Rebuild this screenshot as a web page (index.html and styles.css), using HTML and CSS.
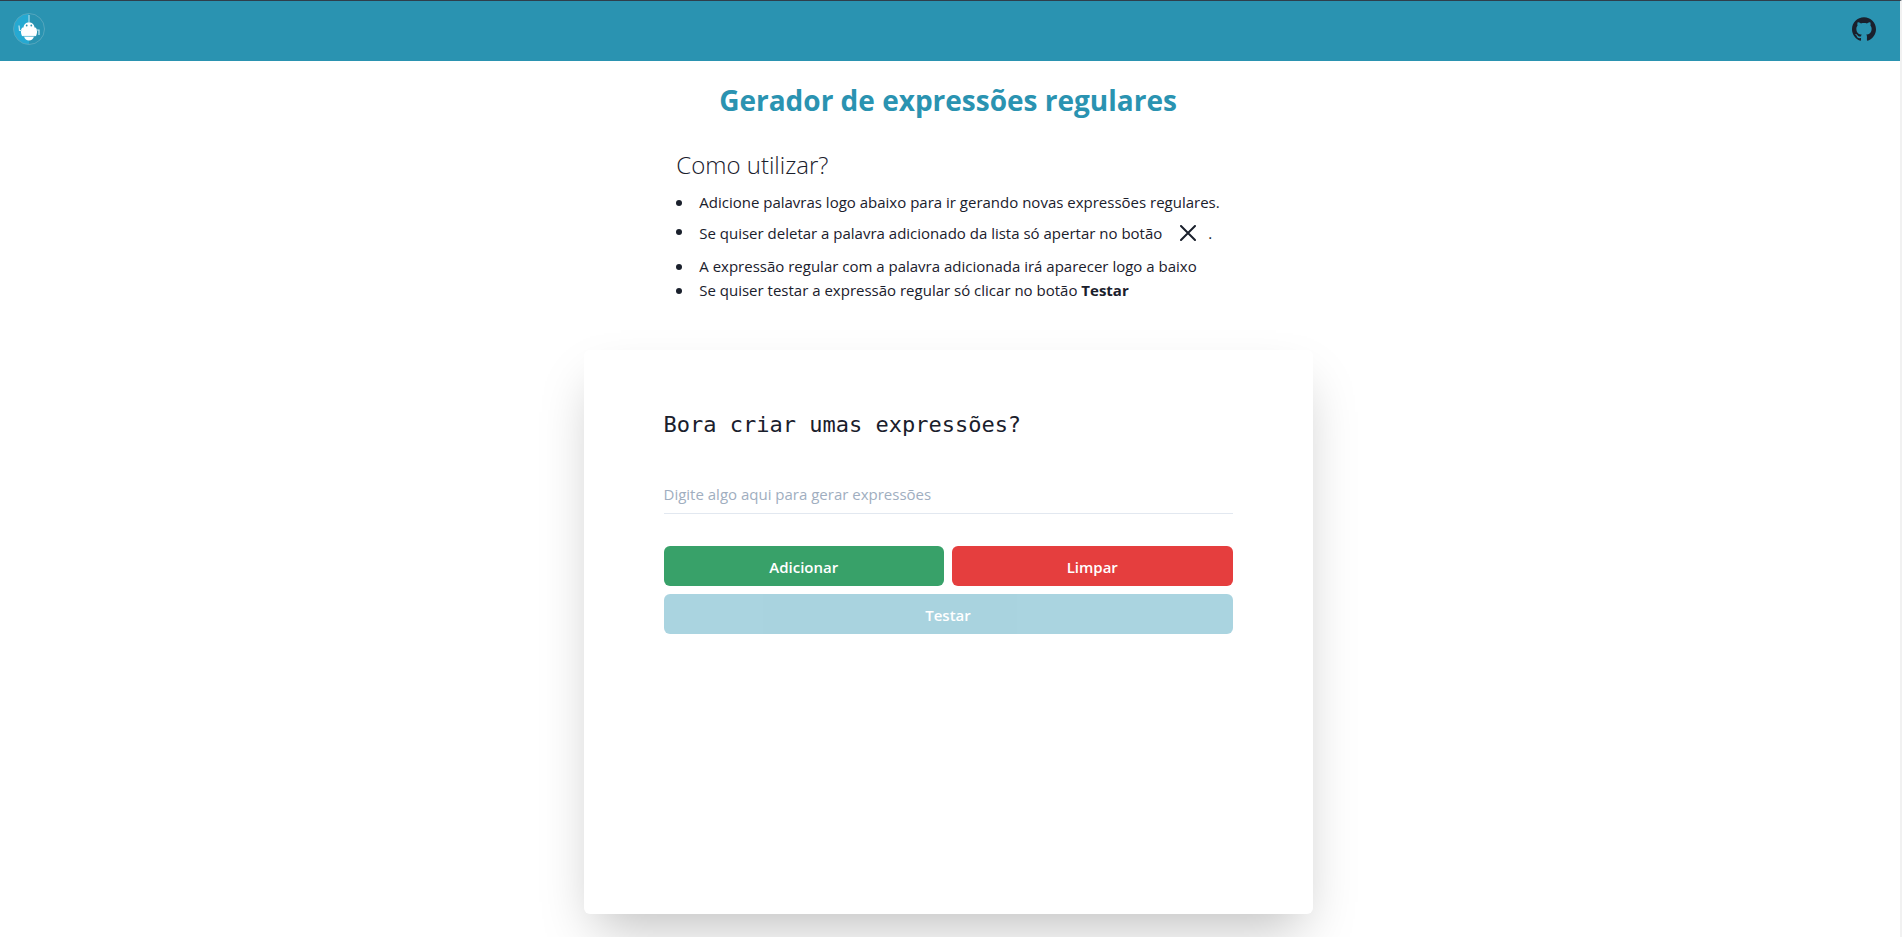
FILE: index.html
```html
<!DOCTYPE html>
<html lang="pt-BR">
<head>
<meta charset="utf-8">
<title>Gerador de expressões regulares</title>
<link rel="stylesheet" href="styles.css">
</head>
<body>
<header class="topbar">
  <a class="logo" href="#" aria-label="Início">
    <svg width="32" height="32" viewBox="0 0 32 32">
      <circle cx="16" cy="16" r="15.5" fill="#2993b1"/>
      <path d="M16 .5a15.500 15.500 0 0 0 0 31z" fill="#25a9d2"/>
      <circle cx="16" cy="16" r="15.500" fill="none" stroke="#55a6bd" stroke-width="1"/>
      <path d="M16 2v8" stroke="#8fd0e4" stroke-width="1.500"/>
      <path d="M10.500 15c0-3.500 2.300-5.500 5.500-5.500s5.500 2 5.500 5.500z" fill="#fff"/>
      <path d="M9.500 14.500h13c2 1.500 2 5 .500 8.500H9c-1.500-3.500-1.500-7 .500-8.500z" fill="#fff"/>
      <path d="M11 23.500h10c-.8 2.500-2.500 4-5 4s-4.200-1.500-5-4z" fill="#fff"/>
      <path d="M9 17.500H6.500L6 12.500M23 17h3v5" fill="none" stroke="#c8e8f2" stroke-width="1.200"/>
      <path d="M9.500 23.300h13" stroke="#75c1d8" stroke-width=".6"/>
      <circle cx="13.700" cy="12.500" r=".9" fill="#2993b1"/>
      <circle cx="18.300" cy="12.500" r=".9" fill="#2993b1"/>
    </svg>
  </a>
  <a class="github" href="#" aria-label="GitHub">
    <svg width="24" height="24" viewBox="0 0 24 24" fill="#1a202c"><path d="M12 .297c-6.630 0-12 5.373-12 12 0 5.303 3.438 9.800 8.205 11.385.6.113.82-.258.82-.577 0-.285-.010-1.040-.015-2.040-3.338.724-4.042-1.610-4.042-1.610C4.422 18.070 3.633 17.700 3.633 17.700c-1.087-.744.084-.729.084-.729 1.205.084 1.838 1.236 1.838 1.236 1.070 1.835 2.809 1.305 3.495.998.108-.776.417-1.305.760-1.605-2.665-.3-5.466-1.332-5.466-5.930 0-1.310.465-2.380 1.235-3.220-.135-.303-.540-1.523.105-3.176 0 0 1.005-.322 3.300 1.230.960-.267 1.980-.399 3-.405 1.020.006 2.040.138 3 .405 2.280-1.552 3.285-1.230 3.285-1.230.645 1.653.240 2.873.120 3.176.765.840 1.230 1.910 1.230 3.220 0 4.610-2.805 5.625-5.475 5.920.420.360.810 1.096.810 2.220 0 1.606-.015 2.896-.015 3.286 0 .315.210.690.825.570C20.565 22.092 24 17.592 24 12.297c0-6.627-5.373-12-12-12"/></svg>
  </a>
</header>
<main class="page">
  <h1 class="title">Gerador de expressões regulares</h1>
  <section class="help">
    <h2 class="help-title">Como utilizar?</h2>
    <ul class="help-list">
      <li>Adicione palavras logo abaixo para ir gerando novas expressões regulares.</li>
      <li class="with-icon"><span>Se quiser deletar a palavra adicionado da lista só apertar no botão</span><svg class="close" width="16" height="16" viewBox="0 0 16 16"><path d="M1 1l14 14M15 1L1 15" stroke="#1a202c" stroke-width="2" stroke-linecap="round"/></svg><span>.</span></li>
      <li>A expressão regular com a palavra adicionada irá aparecer logo a baixo</li>
      <li>Se quiser testar a expressão regular só clicar no botão <strong>Testar</strong></li>
    </ul>
  </section>
  <form class="card">
    <label class="card-title" for="word">Bora criar umas expressões?</label>
    <input class="word" id="word" type="text" placeholder="Digite algo aqui para gerar expressões">
    <div class="actions">
      <button class="btn add" type="button">Adicionar</button>
      <button class="btn clear" type="button">Limpar</button>
      <button class="btn test" type="button" disabled>Testar</button>
    </div>
  </form>
</main>
</body>
</html>
```
FILE: styles.css
```css
* {
  box-sizing: border-box;
  margin: 0;
  padding: 0;
}

html {
  overflow: hidden;
}

body {
  min-height: 100vh;
  border-top: 1px solid #2f3e4b;
  border-right: 2px solid #f1f1f1;
  background: #fff;
  color: #1a202c;
  font: 15px/24px "Open Sans", "Noto Sans", sans-serif;
}

.topbar {
  display: flex;
  justify-content: space-between;
  align-items: flex-start;
  height: 60px;
  padding: 12px 24px 0 13px;
  background: #2a93b1;
}

.logo,
.github {
  display: flex;
}

.github {
  padding-top: 4px;
}

.page {
  display: flex;
  flex-direction: column;
  align-items: center;
  padding-right: 4px;
}

.title {
  margin-top: 19px;
  color: #2a93b1;
  font-size: 28px;
  line-height: 40px;
  font-weight: 700;
}

.help {
  margin-top: 27px;
}

.help-title {
  font-size: 24px;
  line-height: 36px;
  font-weight: 300;
}

.help-list {
  margin-top: 7px;
  list-style: none;
}

.help-list li {
  position: relative;
  padding-left: 23px;
}

.help-list li::before {
  content: "";
  position: absolute;
  top: 10px;
  left: 0;
  width: 6px;
  height: 6px;
  border-radius: 50%;
  background: #1a202c;
}

.help-list .with-icon {
  padding-top: 3px;
  padding-bottom: 7px;
  line-height: 28px;
}

.help-list .with-icon::before {
  top: 15px;
}

.with-icon span,
.close {
  vertical-align: middle;
}

.close {
  margin: 0 12px 0 18px;
}

.card {
  display: flex;
  flex-direction: column;
  width: min(729px, 100%);
  min-height: 564px;
  margin-top: 48px;
  padding: 57px 80px;
  border-radius: 6px;
  background: #fff;
  box-shadow: 0 25px 50px -12px rgba(0, 0, 0, 0.25);
}

.card-title {
  font: 22px/36px "DejaVu Sans Mono", monospace;
}

.word {
  height: 40px;
  margin-top: 31px;
  padding-top: 2px;
  border: 0;
  border-bottom: 1px solid #e2e8f0;
  background: none;
  color: inherit;
  font: 15px "Open Sans", "Noto Sans", sans-serif;
}

.word::placeholder {
  color: #a0aec0;
  opacity: 1;
}

.actions {
  display: grid;
  grid-template-columns: 1fr 1fr;
  gap: 8px;
  margin-top: 32px;
}

.btn {
  height: 40px;
  padding-top: 2px;
  border: 0;
  border-radius: 6px;
  color: #fff;
  font: 600 15px "Open Sans", "Noto Sans", sans-serif;
}

.add {
  background: #38a169;
}

.clear {
  background: #e53e3e;
}

.test {
  grid-column: 1 / -1;
  background: #2a93b1;
  opacity: 0.4;
}
```
